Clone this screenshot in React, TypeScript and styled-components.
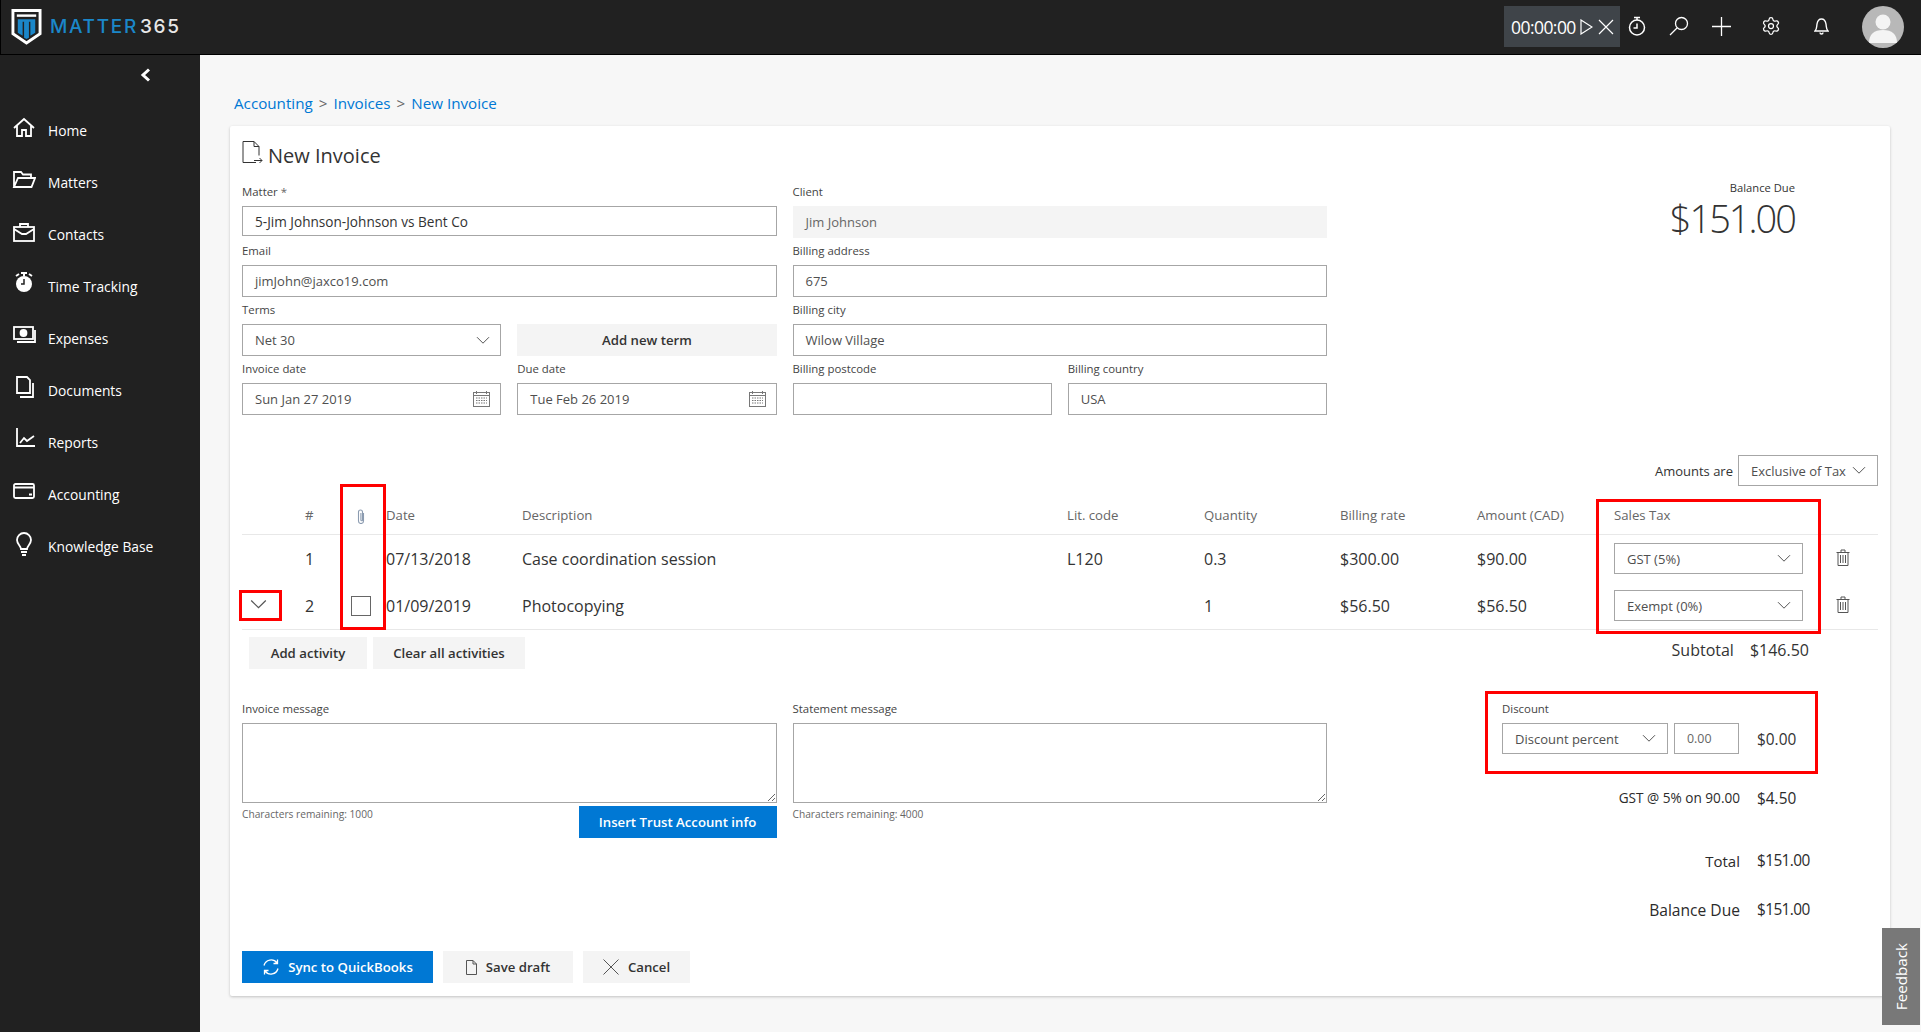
import React from 'react';
import styled, { createGlobalStyle } from 'styled-components';
import { Settings } from 'lucide-react';

const Global = createGlobalStyle`
  html, body { margin: 0; padding: 0; height: 100%; overflow: hidden; background: #f7f7f7; }
  * { box-sizing: border-box; }
  body { font-family: "Open Sans", "Noto Sans", Arial, sans-serif; color: #333; }
`;

const Page = styled.div`
  width: 1921px; height: 1032px; display: flex; flex-direction: column; position: relative; overflow: hidden;
`;
const TopBar = styled.header`
  height: 55px; flex: none; display: flex; align-items: center; background: #212121;
  border-bottom: 1px solid #000; border-left: 1px solid #000; padding-right: 17px;
`;
const Brand = styled.div`
  display: flex; align-items: center; margin-left: 10px; margin-top: -1px; flex: 1;
`;
const BrandName = styled.span`
  font-family: "Inter", "Lato", sans-serif; font-size: 19px; letter-spacing: 1.7px; margin-left: 8px; color: #1b87c9; font-weight: 500;
`;
const BrandNum = styled.span`
  color: #e8e8e8; margin-left: 2px;
`;
const TimerBox = styled.div`
  width: 116px; height: 41px; margin-top: -1px; background: #3f4449; display: flex; align-items: center; padding-left: 7px; color: #fff; font-size: 17.5px;
`;
const TimerText = styled.span` letter-spacing: -0.55px; margin-right: 4px; `;
const ToolIcon = styled.span<{ $w: number }>`
  width: ${p => p.$w}px; display: flex; justify-content: center; align-items: center; color: #fff; margin-top: -2px;
`;
const Avatar = styled.div`
  width: 42px; height: 42px; border-radius: 50%; background: #b8b8b8; overflow: hidden; margin-left: 24px; margin-top: -1px;
`;

const Body = styled.div` flex: 1; display: flex; min-height: 0; `;
const Side = styled.nav`
  width: 200px; flex: none; background: #212121; color: #fff;
`;
const Collapse = styled.div`
  height: 49px; display: flex; justify-content: flex-end; padding: 13px 49px 0 0;
`;
const NavItem = styled.div`
  height: 52.1px; display: flex; align-items: center; padding-left: 12px; font-size: 13.8px; gap: 12px; color: #fff;
  svg { margin-top: -5px; flex: none; }
`;

const Main = styled.main`
  flex: 1; min-width: 0; background: #f7f7f7; padding: 0 31px 0 30px;
`;
const Crumbs = styled.div`
  height: 71px; padding: 38px 0 0 4px; font-size: 15.2px; line-height: 20px; color: #0078d4; display: flex; gap: 6px;
`;
const CrumbSep = styled.span` color: #666; `;
const Card = styled.section`
  position: relative; height: 870px; background: #fff; border-radius: 2px; box-shadow: 0 1px 3px rgba(0,0,0,.22); padding: 0 12px;
`;
const Annot = styled.div<{ $x: number; $y: number; $w: number; $h: number }>`
  position: absolute; left: ${p => p.$x - 230}px; top: ${p => p.$y - 126}px; width: ${p => p.$w}px; height: ${p => p.$h}px;
  border: 3px solid #f00; pointer-events: none;
`;
const Top = styled.div` display: flex; `;
const FormSide = styled.div` width: 1085px; flex: none; `;
const Title = styled.h1`
  height: 53px; margin: 0; padding-top: 15px; display: flex; align-items: flex-start; gap: 5px; font-size: 20px; font-weight: 400; line-height: 30px; color: #333;
  svg { margin-top: -1px; }
`;
const FormGrid = styled.div`
  display: grid; grid-template-columns: repeat(4, 1fr); column-gap: 16px; grid-auto-rows: 59px;
`;
const Field = styled.div<{ $span?: number }>`
  grid-column: span ${p => p.$span ?? 1};
`;
const Label = styled.div`
  height: 27px; line-height: 26px; font-size: 11.4px; color: #444;
`;
const Req = styled.span` color: #666; `;
const Input = styled.div<{ $h?: number; $off?: boolean; $wide?: boolean }>`
  height: ${p => p.$h ?? 32}px; display: flex; align-items: center; justify-content: space-between; padding: 0 10px 0 12px;
  font-size: ${p => p.$wide ? 13.6 : 13}px; color: ${p => p.$off ? '#666' : p.$wide ? '#333' : '#4f4f4f'};
  background: ${p => p.$off ? '#f4f4f4' : '#fff'};
  border: 1px solid ${p => p.$off ? '#f4f4f4' : '#a6a6a6'};
`;
const GhostBtn = styled.div`
  height: 32px; display: flex; align-items: center; justify-content: center; gap: 9px; background: #f4f4f4; font-size: 13.2px; font-weight: 600; color: #333;
`;
const AddTerm = styled(GhostBtn)` margin-top: 27px; `;
const BalanceBox = styled.div`
  flex: 1; text-align: right; padding: 53px 83px 0 0;
`;
const BalLabel = styled.div` font-size: 11.2px; line-height: 18px; color: #333; `;
const BalAmount = styled.div` font-size: 38px; font-weight: 300; line-height: 46px; color: #333; letter-spacing: -2px; margin-top: -2px; `;

const AmountsRow = styled.div`
  margin-top: 40px; height: 31px; display: flex; justify-content: flex-end; align-items: center; gap: 5px; font-size: 13px;
`;
const SelectBox = styled.div<{ $w: number }>`
  width: ${p => p.$w}px; height: 31px; flex: none; display: flex; align-items: center; justify-content: space-between;
  padding: 0 11px 0 12px; border: 1px solid #a6a6a6; font-size: 13px; color: #4f4f4f; background: #fff;
`;

const cols = '63px 37px 38px 142px 545px 137px 136px 137px 137px 208px 56px';
const HeadRow = styled.div`
  display: grid; grid-template-columns: ${cols}; height: 49px; align-items: end; padding-bottom: 10px;
  border-bottom: 1px solid #e8e8e8; font-size: 13.2px; color: #666; line-height: 18px;
`;
const TRow = styled.div<{ $last?: boolean }>`
  display: grid; grid-template-columns: ${cols}; height: ${p => p.$last ? 48 : 47}px; align-items: center; font-size: 16px; color: #333;
  ${p => p.$last ? 'border-bottom: 1px solid #e8e8e8;' : ''}
`;
const Cell = styled.div` padding-top: 1px; `;
const DateCell = styled(Cell)` padding-left: 6px; `;
const HeadDate = styled.div` padding-left: 6px; `;
const CenterCell = styled.div` display: flex; justify-content: center; `;
const CheckCell = styled(CenterCell)` padding-top: 1px; `;
const ChevCell = styled.div` display: flex; padding-left: 8px; margin-top: -2px; `;
const TrashCell = styled.div` display: flex; padding-left: 14px; margin-top: -2px; `;
const Check = styled.div` width: 20px; height: 20px; border: 1px solid #666; background: #fff; `;

const Actions = styled.div`
  margin-top: 7px; display: flex; align-items: flex-start; padding: 0 69px 0 7px;
`;
const ActionBtns = styled.div` display: flex; gap: 6px; flex: 1; `;
const ActionBtn = styled(GhostBtn)<{ $w: number }>` width: ${p => p.$w}px; `;
const SubLabel = styled.div` font-size: 16px; line-height: 27px; `;
const SubVal = styled.div` font-size: 16px; line-height: 27px; margin-left: 16px; `;

const Lower = styled.div` margin-top: 27px; display: flex; `;
const Messages = styled.div`
  width: 1085px; flex: none; display: grid; grid-template-columns: 1fr 1fr; column-gap: 16px; align-items: start;
`;
const Area = styled.textarea`
  display: block; width: 100%; height: 80px; border: 1px solid #a6a6a6; background: #fff; resize: vertical; outline: none; margin: 0;
`;
const MsgFoot = styled.div`
  display: flex; justify-content: space-between; align-items: flex-start; margin-top: 3px;
`;
const Remaining = styled.div` font-size: 10.2px; line-height: 16px; color: #666; `;
const BlueBtn = styled.div<{ $w: number }>`
  width: ${p => p.$w}px; height: 32px; display: flex; align-items: center; justify-content: center; gap: 8px;
  background: #0078d4; color: #fff; font-size: 13.2px; font-weight: 600;
`;
const Summary = styled.div`
  margin-left: 175px; width: 316px; display: flex; flex-direction: column;
`;
const DiscountControls = styled.div` display: flex; align-items: center; gap: 6px; `;
const DiscInput = styled.div`
  width: 65px; height: 31px; border: 1px solid #a6a6a6; display: flex; align-items: center; padding-left: 12px; font-size: 12.4px; color: #666;
`;
const DiscVal = styled.div` margin-left: 12px; font-size: 15.4px; color: #333; padding-top: 2px; `;
const SumRow = styled.div<{ $mt: number }>`
  margin-top: ${p => p.$mt}px; height: 24px; display: flex; align-items: center; justify-content: flex-end; line-height: 24px;
`;
const SumLabel = styled.div<{ $small?: boolean; $fs?: number }>`
  flex: 1; text-align: right; font-size: ${p => p.$fs ?? 15.6}px; color: #2b2b2b;
`;
const SumVal = styled.div<{ $strong?: boolean }>`
  width: 61px; margin-left: 17px; font-size: 15.4px; letter-spacing: ${p => p.$strong ? '-0.6px' : '0'}; color: #2b2b2b; ${p => p.$strong ? '' : 'padding-top: 2px;'}
`;
const Footer = styled.div` margin-top: 29px; display: flex; gap: 10px; `;

const Feedback = styled.div`
  position: absolute; right: 1px; bottom: 7px; width: 38px; height: 97px; background: #787878; color: #fff;
  display: flex; align-items: center; justify-content: center; font-size: 15.2px;
`;
const FeedbackText = styled.span` writing-mode: vertical-rl; transform: rotate(180deg); `;

const Chevron = ({ c = '#555', w = 14 }: { c?: string; w?: number }) => (
  <svg width={w} height={w * 0.6} viewBox="0 0 14 8" fill="none" stroke={c} strokeWidth="1"><path d="M1 1l6 6 6-6" /></svg>
);
const Cal = () => (
  <svg width="17" height="16" viewBox="0 0 17 16" fill="none" stroke="#777" strokeWidth="1">
    <rect x=".5" y="1.5" width="16" height="14" /><path d="M.5 4.5h16M3.5 0v3M13.5 0v3" />
    <path d="M3 7h11M3 9.5h11M3 12h11" strokeDasharray="1.5 1" />
  </svg>
);
const Trash = () => (
  <svg width="14" height="17" viewBox="0 0 14 17" fill="none" stroke="#555" strokeWidth="1">
    <path d="M.5 3.5h13M5 3.5V1h4v2.5M2 3.5v13h10v-13M4.5 6v8M7 6v8M9.5 6v8" />
  </svg>
);
const Clip = () => (
  <svg width="10" height="15" viewBox="0 0 10 15" fill="none" stroke="#8b9bb0" strokeWidth="1.1">
    <path d="M7.5 4v8a2.5 2.5 0 0 1-5 0V3a2 2 0 0 1 4 0v8a.8.8 0 0 1-1.6 0V4" />
  </svg>
);
const Logo = () => (
  <svg width="31" height="38" viewBox="0 0 32 38">
    <path d="M2 2h28v24L16 35.500 2 26z" fill="none" stroke="#fff" strokeWidth="3" />
    <path d="M6 6h20v2.500H6z" fill="#fff" />
    <path d="M7 11h18v14l-5 3V13.500h-1.500V30l-2.500 1.500-2.500-1.500V13.500H12V28l-5-3z" fill="#1b87c9" />
  </svg>
);
const s = { fill: 'none', stroke: '#fff', strokeWidth: 1.5 } as const;
const icons: Record<string, React.ReactNode> = {
  Home: <path {...s} d="M2 12 12 3l10 9M5 10v10h5v-6h4v6h5V10" strokeWidth={1.8} />,
  Matters: <path {...s} d="M2 19V4h7l2 2.500h8V10M2 19l4-9h17l-3.500 9z" strokeWidth={1.8} />,
  Contacts: <g {...s} strokeWidth={1.8}><rect x="2" y="7" width="20" height="14" /><path d="M8 7V4h8v3M2 9l8 5h4l8-5" /></g>,
  'Time Tracking': <g><circle cx="12" cy="12" r="8" fill="#fff" /><path d="M12 7v5h-3" stroke="#212121" fill="none" strokeWidth="1.500" /><path d="M9 1h6M12 1v3M4 4l3-2M20 4l-3-2" {...s} strokeWidth={2} /></g>,
  Expenses: <g {...s} strokeWidth={1.800}><rect x="2" y="3" width="19" height="12" /><circle cx="11.500" cy="9" r="3" fill="#fff" /><path d="M5 18h18V6" /></g>,
  Documents: <g {...s} strokeWidth={1.800}><path d="M5 1h10l3 3v13H5z" /><path d="M8 21h13V7" /></g>,
  Reports: <g {...s} strokeWidth={1.800}><path d="M5 0v18h18" /><path d="M8 15l4-5 3 3 7-5" /></g>,
  Accounting: <g {...s} strokeWidth={1.800}><rect x="2" y="4" width="20" height="14" rx="1.500" /><path d="M2 7.500h20M17 14.500h3" /></g>,
  'Knowledge Base': <g {...s} strokeWidth={1.800}><path d="M9 17c0-3-4-5-4-9a7 7 0 0 1 14 0c0 4-4 6-4 9z" /><path d="M9 20h6M10 23h4" /></g>,
};
const navNames = ['Home', 'Matters', 'Contacts', 'Time Tracking', 'Expenses', 'Documents', 'Reports', 'Accounting', 'Knowledge Base'];

export default function App() {
  return (
    <Page>
      <Global />
      <TopBar>
        <Brand>
          <Logo />
          <BrandName>MATTER<BrandNum>365</BrandNum></BrandName>
        </Brand>
        <TimerBox>
          <TimerText>00:00:00</TimerText>
          <svg width="13" height="16" viewBox="0 0 13 16" fill="none" stroke="#fff" strokeWidth="1.200"><path d="M1 1l11 7-11 7z" /></svg>
          <svg width="16" height="16" viewBox="0 0 16 16" stroke="#fff" strokeWidth="1.200" style={{ marginLeft: 5 }}><path d="M1 1l14 14M15 1L1 15" /></svg>
        </TimerBox>
        <ToolIcon $w={34}><svg width="18" height="20" viewBox="0 0 18 20" fill="none" stroke="#fff" strokeWidth="1.500"><circle cx="9" cy="11.500" r="7.500" /><path d="M6 1.500h6M9 2v2M9 7.500v4.500H5.500" /></svg></ToolIcon>
        <ToolIcon $w={50}><svg width="20" height="20" viewBox="0 0 20 20" fill="none" stroke="#fff" strokeWidth="1.300"><circle cx="12.500" cy="7.500" r="6" /><path d="M8 12l-7 7" /></svg></ToolIcon>
        <ToolIcon $w={34}><svg width="19" height="19" viewBox="0 0 19 19" stroke="#fff" strokeWidth="1.300"><path d="M9.500 0v19M0 9.500h19" /></svg></ToolIcon>
        <ToolIcon $w={66}><Settings size={20} strokeWidth={1.5} /></ToolIcon>
        <ToolIcon $w={34}><svg width="15" height="18" viewBox="0 0 15 18" fill="none" stroke="#fff" strokeWidth="1.400"><path d="M1 14h13c-2-2-1.500-4-2-7-.5-3-2-5-4.500-5S3.500 4 3 7c-.5 3 0 5-2 7zM6 15.500a1.500 1.500 0 0 0 3 0" /></svg></ToolIcon>
        <Avatar>
          <svg width="42" height="42" viewBox="0 0 42 42" fill="#f4f4f4"><circle cx="21" cy="16" r="7.500" /><path d="M7 37c0-9 5-13 14-13s14 4 14 13z" /></svg>
        </Avatar>
      </TopBar>
      <Body>
        <Side>
          <Collapse>
            <svg width="11" height="14" viewBox="0 0 11 14" fill="none" stroke="#fff" strokeWidth="3"><path d="M9 1.500L3 7l6 5.500" /></svg>
          </Collapse>
          {navNames.map(n => (
            <NavItem key={n}>
              <svg width="24" height="24" viewBox="0 0 24 24">{icons[n]}</svg>
              <span>{n}</span>
            </NavItem>
          ))}
        </Side>
        <Main>
          <Crumbs>
            <span>Accounting</span><CrumbSep>&gt;</CrumbSep><span>Invoices</span><CrumbSep>&gt;</CrumbSep><span>New Invoice</span>
          </Crumbs>
          <Card>
            <Top>
              <FormSide>
                <Title>
                  <svg width="21" height="24" viewBox="0 0 21 24" fill="none" stroke="#333" strokeWidth="1"><path d="M1 1.500h11l5 5v9M12 1.500v5h5M1 1.500v21h13M12 20.500h8M17.500 18l2.500 2.500-2.500 2.500" /></svg>
                  New Invoice
                </Title>
                <FormGrid>
                  <Field $span={2}><Label>Matter <Req>*</Req></Label><Input $h={30} $wide>5-Jim Johnson-Johnson vs Bent Co</Input></Field>
                  <Field $span={2}><Label>Client</Label><Input $off>Jim Johnson</Input></Field>
                  <Field $span={2}><Label>Email</Label><Input>jimJohn@jaxco19.com</Input></Field>
                  <Field $span={2}><Label>Billing address</Label><Input>675</Input></Field>
                  <Field><Label>Terms</Label><Input>Net 30<Chevron /></Input></Field>
                  <Field><AddTerm>Add new term</AddTerm></Field>
                  <Field $span={2}><Label>Billing city</Label><Input>Wilow Village</Input></Field>
                  <Field><Label>Invoice date</Label><Input>Sun Jan 27 2019<Cal /></Input></Field>
                  <Field><Label>Due date</Label><Input>Tue Feb 26 2019<Cal /></Input></Field>
                  <Field><Label>Billing postcode</Label><Input /></Field>
                  <Field><Label>Billing country</Label><Input>USA</Input></Field>
                </FormGrid>
              </FormSide>
              <BalanceBox>
                <BalLabel>Balance Due</BalLabel>
                <BalAmount>$151.00</BalAmount>
              </BalanceBox>
            </Top>
            <AmountsRow>
              Amounts are
              <SelectBox $w={140}>Exclusive of Tax<Chevron /></SelectBox>
            </AmountsRow>
            <HeadRow>
              <div /><div>#</div><CenterCell><Clip /></CenterCell><HeadDate>Date</HeadDate><div>Description</div>
              <div>Lit. code</div><div>Quantity</div><div>Billing rate</div><div>Amount (CAD)</div><div>Sales Tax</div><div />
            </HeadRow>
            <TRow>
              <div /><Cell>1</Cell><div /><DateCell>07/13/2018</DateCell><Cell>Case coordination session</Cell>
              <Cell>L120</Cell><Cell>0.3</Cell><Cell>$300.00</Cell><Cell>$90.00</Cell>
              <SelectBox $w={189}>GST (5%)<Chevron /></SelectBox><TrashCell><Trash /></TrashCell>
            </TRow>
            <TRow $last>
              <ChevCell><Chevron w={17} /></ChevCell><Cell>2</Cell><CheckCell><Check /></CheckCell><DateCell>01/09/2019</DateCell><Cell>Photocopying</Cell>
              <div /><Cell>1</Cell><Cell>$56.50</Cell><Cell>$56.50</Cell>
              <SelectBox $w={189}>Exempt (0%)<Chevron /></SelectBox><TrashCell><Trash /></TrashCell>
            </TRow>
            <Actions>
              <ActionBtns>
                <ActionBtn $w={118}>Add activity</ActionBtn>
                <ActionBtn $w={152}>Clear all activities</ActionBtn>
              </ActionBtns>
              <SubLabel>Subtotal</SubLabel>
              <SubVal>$146.50</SubVal>
            </Actions>
            <Lower>
              <Messages>
                <div>
                  <Label>Invoice message</Label>
                  <Area />
                  <MsgFoot>
                    <Remaining>Characters remaining: 1000</Remaining>
                    <BlueBtn $w={198}>Insert Trust Account info</BlueBtn>
                  </MsgFoot>
                </div>
                <div>
                  <Label>Statement message</Label>
                  <Area />
                  <MsgFoot><Remaining>Characters remaining: 4000</Remaining></MsgFoot>
                </div>
              </Messages>
              <Summary>
                <Label>Discount</Label>
                <DiscountControls>
                  <SelectBox $w={166}>Discount percent<Chevron /></SelectBox>
                  <DiscInput>0.00</DiscInput>
                  <DiscVal>$0.00</DiscVal>
                </DiscountControls>
                <SumRow $mt={32}><SumLabel $fs={13.6}>GST @ 5% on 90.00</SumLabel><SumVal>$4.50</SumVal></SumRow>
                <SumRow $mt={39}><SumLabel $fs={15}>Total</SumLabel><SumVal $strong>$151.00</SumVal></SumRow>
                <SumRow $mt={25}><SumLabel>Balance Due</SumLabel><SumVal $strong>$151.00</SumVal></SumRow>
              </Summary>
            </Lower>
            <Footer>
              <BlueBtn $w={191}>
                <svg width="18" height="18" viewBox="0 0 18 18" fill="none" stroke="#fff" strokeWidth="1.300"><path d="M2 7.500A7.300 7.300 0 0 1 15 5M16 10.500A7.300 7.300 0 0 1 3 13M15.500 1.500V5.500h-4M2.500 16.500v-4h4" /></svg>
                Sync to QuickBooks
              </BlueBtn>
              <ActionBtn $w={130}>
                <svg width="11" height="15" viewBox="0 0 11 15" fill="none" stroke="#555" strokeWidth="1"><path d="M.5.500h6.500l3.500 3.500v10.500H.5zM7 .5V4h3.500" /></svg>
                Save draft
              </ActionBtn>
              <ActionBtn $w={107}>
                <svg width="16" height="16" viewBox="0 0 16 16" stroke="#555" strokeWidth="1"><path d="M.5.500l15 15M15.500.500l-15 15" /></svg>
                Cancel
              </ActionBtn>
            </Footer>
            <Annot $x={340} $y={484} $w={46} $h={146} />
            <Annot $x={239} $y={590} $w={43} $h={31} />
            <Annot $x={1596} $y={499} $w={225} $h={135} />
            <Annot $x={1485} $y={691} $w={333} $h={83} />
          </Card>
        </Main>
      </Body>
      <Feedback><FeedbackText>Feedback</FeedbackText></Feedback>
    </Page>
  );
}
